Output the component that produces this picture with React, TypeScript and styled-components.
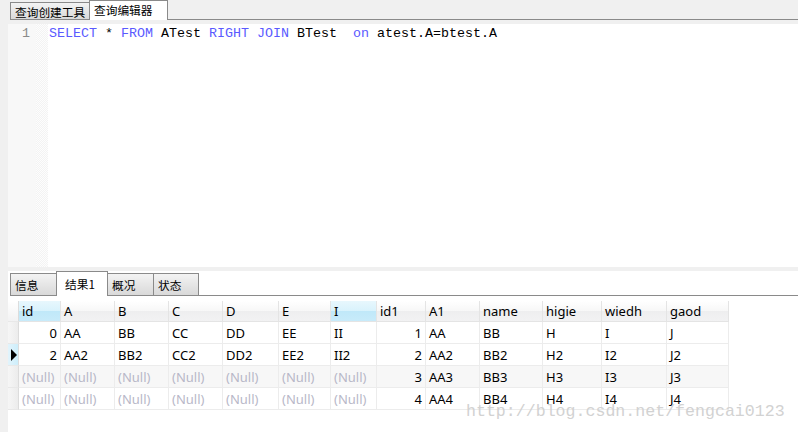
import React from "react";
import styled, { createGlobalStyle } from "styled-components";

const GlobalStyle = createGlobalStyle`
  html, body {
    margin: 0;
    padding: 0;
    background: #f0f0f0;
  }
  body {
    font-family: "Noto Sans", "Noto Sans CJK SC", sans-serif;
  }
`;

const Page = styled.div`
  position: relative;
  width: 798px;
  height: 432px;
  overflow: hidden;
  display: flex;
  flex-direction: column;
  background: #f0f0f0;
`;

const TabBar = styled.div<{ $pad: number }>`
  display: flex;
  align-items: flex-end;
  padding-left: ${(p) => p.$pad}px;
  flex-shrink: 0;
`;

const Tab = styled.div<{ $active?: boolean; $h: number; $w: number }>`
  box-sizing: border-box;
  width: ${(p) => p.$w}px;
  height: ${(p) => (p.$active ? p.$h + 2 : p.$h)}px;
  padding: ${(p) => (p.$active ? "0 0 2px 8px" : "0 0 0 4px")};
  display: flex;
  align-items: center;
  font-family: "Noto Sans CJK SC", sans-serif;
  font-size: 11.7px;
  color: #000;
  border: 1px solid #8a8a8a;
  border-bottom: ${(p) => (p.$active ? "none" : "1px solid #8a8a8a")};
  background: ${(p) =>
    p.$active ? "#ffffff" : "linear-gradient(#f3f3f3, #e6e6e6 50%, #d9d9d9)"};
  margin-right: -1px;
  white-space: nowrap;
`;

const TabFill = styled.div`
  flex: 1;
  border-bottom: 1px solid #8a8a8a;
`;

const Body = styled.div`
  flex: 1;
  display: flex;
  flex-direction: column;
  padding: 4px 0 0 8px;
  min-height: 0;
`;

const Editor = styled.div`
  height: 243px;
  display: flex;
  background: #fff;
  flex-shrink: 0;
`;

const Gutter = styled.div`
  width: 28px;
  background: #f8f8f8;
  color: #8a8a8a;
  font-family: "Liberation Mono", monospace;
  font-size: 13.33px;
  text-align: right;
  padding: 2px 6px 0 0;
  box-sizing: border-box;
`;

const FoldStrip = styled.div`
  width: 12px;
  background-color: #fbfbfb;
  background-image: repeating-conic-gradient(#f3f3f3 0 25%, #fdfdfd 0 50%);
  background-size: 2px 2px;
`;

const Code = styled.pre`
  margin: 0;
  padding: 2px 0 0 1px;
  font-family: "Liberation Mono", monospace;
  font-size: 13.33px;
  color: #000;
`;

const Kw = styled.span`
  color: #5a5aff;
`;

const Splitter = styled.div`
  height: 4px;
  flex-shrink: 0;
`;

const Results = styled.div`
  flex: 1;
  background: #fff;
  display: flex;
  flex-direction: column;
`;

const Grid = styled.div<{ $cols: string }>`
  display: grid;
  grid-template-columns: ${(p) => p.$cols};
  margin-top: 5px;
  width: max-content;
  font-family: "Noto Sans", "Noto Sans CJK SC", sans-serif;
  font-size: 13px;
`;

const Head = styled.div<{ $hl?: boolean }>`
  height: 21px;
  box-sizing: border-box;
  padding: 0 3px;
  display: flex;
  align-items: center;
  border-right: 1px solid #e4e4e4;
  border-bottom: 1px solid #e4e4e4;
  background: ${(p) =>
    p.$hl
      ? "linear-gradient(#e8f7fd, #d9f2fc 50%, #c0e8f9 51%, #c8ebfa)"
      : "linear-gradient(#ffffff, #f7f7f7 50%, #eeeeef 51%, #f2f2f3)"};
  color: #000;
`;

const Cell = styled.div<{ $right?: boolean; $null?: boolean; $alt?: boolean }>`
  height: 22px;
  box-sizing: border-box;
  padding: 0 3px;
  display: flex;
  align-items: center;
  justify-content: ${(p) => (p.$right ? "flex-end" : "flex-start")};
  border-right: 1px solid #ececec;
  border-bottom: 1px solid #ececec;
  background: ${(p) => (p.$alt ? "#f7f7f7" : "#fff")};
  color: ${(p) => (p.$null ? "#b8b8c8" : "#000")};
  white-space: nowrap;
  overflow: hidden;
`;

const Indicator = styled.div<{ $current?: boolean; $head?: boolean }>`
  height: ${(p) => (p.$head ? 21 : 22)}px;
  box-sizing: border-box;
  border-right: 1px solid #dcdcdc;
  border-bottom: 1px solid #e8e8e8;
  display: flex;
  align-items: center;
  justify-content: center;
  background: ${(p) =>
    p.$current
      ? "linear-gradient(90deg, #e2f4fc, #cdeefb)"
      : p.$head
      ? "linear-gradient(#ffffff, #f2f2f3)"
      : "linear-gradient(90deg, #f6f6f6, #ececec)"};
`;

const Arrow = styled.div`
  width: 0;
  height: 0;
  border-top: 6px solid transparent;
  border-bottom: 6px solid transparent;
  border-left: 6px solid #000;
  margin-left: 1px;
`;

// csdn watermark printed over the bottom right of the grid
const Watermark = styled.div`
  position: absolute;
  left: 466px;
  top: 402px;
  font-family: "Liberation Mono", monospace;
  font-size: 16.6px;
  color: #d2d2d2;
  white-space: nowrap;
  pointer-events: none;
`;

type Col = { name: string; w: number; num?: boolean; hl?: boolean };

const columns: Col[] = [
  { name: "id", w: 42, num: true, hl: true },
  { name: "A", w: 54 },
  { name: "B", w: 54 },
  { name: "C", w: 54 },
  { name: "D", w: 56 },
  { name: "E", w: 52 },
  { name: "I", w: 46, hl: true },
  { name: "id1", w: 49, num: true },
  { name: "A1", w: 54 },
  { name: "name", w: 63 },
  { name: "higie", w: 59 },
  { name: "wiedh", w: 65 },
  { name: "gaod", w: 62 },
];

const N = null;
const rows: (string | null)[][] = [
  ["0", "AA", "BB", "CC", "DD", "EE", "II", "1", "AA", "BB", "H", "I", "J"],
  ["2", "AA2", "BB2", "CC2", "DD2", "EE2", "II2", "2", "AA2", "BB2", "H2", "I2", "J2"],
  [N, N, N, N, N, N, N, "3", "AA3", "BB3", "H3", "I3", "J3"],
  [N, N, N, N, N, N, N, "4", "AA4", "BB4", "H4", "I4", "J4"],
];

export default function App() {
  const template = "11px " + columns.map((c) => c.w + "px").join(" ");

  return (
    <Page>
      <GlobalStyle />
      <TabBar $pad={10}>
        <Tab $h={18} $w={80}>查询创建工具</Tab>
        <Tab $h={18} $w={79} $active style={{ paddingLeft: 4 }}>
          查询编辑器
        </Tab>
        <TabFill />
      </TabBar>

      <Body>
        <Editor>
          <Gutter>1</Gutter>
          <FoldStrip />
          <Code>
            <Kw>SELECT</Kw> * <Kw>FROM</Kw> ATest <Kw>RIGHT</Kw> <Kw>JOIN</Kw> BTest  <Kw>on</Kw>{" "}
            atest.A=btest.A
          </Code>
        </Editor>

        <Splitter />

        <Results>
          <TabBar $pad={2}>
            <Tab $h={23} $w={47}>信息</Tab>
            <Tab $h={23} $w={52} $active>结果1</Tab>
            <Tab $h={23} $w={47}>概况</Tab>
            <Tab $h={23} $w={46}>状态</Tab>
            <TabFill />
          </TabBar>

          <Grid $cols={template}>
            <Indicator $head />
            {columns.map((c) => (
              <Head key={c.name} $hl={c.hl}>
                {c.name}
              </Head>
            ))}
            {rows.map((r, i) => (
              <React.Fragment key={i}>
                <Indicator $current={i === 1}>{i === 1 && <Arrow />}</Indicator>
                {r.map((v, j) => (
                  <Cell key={j} $right={columns[j].num && v !== null} $null={v === null} $alt={i === 2}>
                    {v === null ? "(Null)" : v}
                  </Cell>
                ))}
              </React.Fragment>
            ))}
          </Grid>
        </Results>
      </Body>

      <Watermark>http://blog.csdn.net/fengcai0123</Watermark>
    </Page>
  );
}
